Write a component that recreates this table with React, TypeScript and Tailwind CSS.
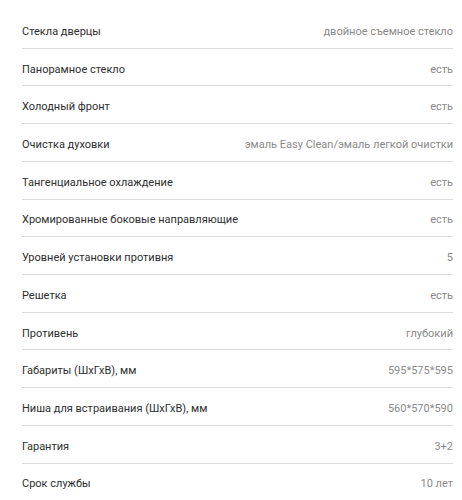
import React from 'react';

const specs = [
  { label: 'Стекла дверцы', value: 'двойное съемное стекло' },
  { label: 'Панорамное стекло', value: 'есть' },
  { label: 'Холодный фронт', value: 'есть' },
  { label: 'Очистка духовки', value: 'эмаль Easy Clean/эмаль легкой очистки' },
  { label: 'Тангенциальное охлаждение', value: 'есть' },
  { label: 'Хромированные боковые направляющие', value: 'есть' },
  { label: 'Уровней установки противня', value: '5' },
  { label: 'Решетка', value: 'есть' },
  { label: 'Противень', value: 'глубокий' },
  { label: 'Габариты (ШхГхВ), мм', value: '595*575*595' },
  { label: 'Ниша для встраивания (ШхГхВ), мм', value: '560*570*590' },
  { label: 'Гарантия', value: '3+2' },
  { label: 'Срок службы', value: '10 лет' },
];

const App = () => {
  return (
    <div className="min-h-screen bg-white pt-[11px] pl-[22px] pr-[9px] font-['Roboto',sans-serif]">
      {specs.map((item) => (
        <div
          key={item.label}
          className="flex h-[37.73px] items-center justify-between border-b border-[#dcdcdc] pt-[5px] text-[11px] leading-[14px]"
        >
          <span className="text-[#2e2e2e]">{item.label}</span>
          <span className="text-[#8a8a8a]">{item.value}</span>
        </div>
      ))}
    </div>
  );
};

export default App;
